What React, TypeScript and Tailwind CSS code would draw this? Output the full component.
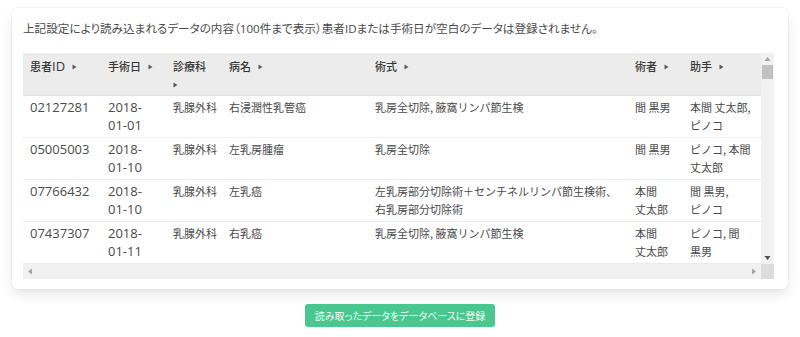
import React from "react";

const Arrow = () => (
  <svg width="5" height="6" viewBox="0 0 5 6" className="inline-block align-middle ml-[7px] mb-[2px]">
    <path d="M0.5 0.5 L4.5 3 L0.5 5.5 Z" fill="#5a5a5a" />
  </svg>
);

const L = ({ children }: { children: React.ReactNode }) => (
  <span className="font-['Open_Sans',sans-serif] text-[13px]">{children}</span>
);

type Row = {
  id: string;
  date: [string, string];
  dept: string;
  disease: string;
  op: string[];
  surgeon: string[];
  assist: string[];
};

const rows: Row[] = [
  {
    id: "02127281",
    date: ["2018-", "01-01"],
    dept: "乳腺外科",
    disease: "右浸潤性乳管癌",
    op: ["乳房全切除, 腋窩リンパ節生検"],
    surgeon: ["間 黒男"],
    assist: ["本間 丈太郎,", "ピノコ"],
  },
  {
    id: "05005003",
    date: ["2018-", "01-10"],
    dept: "乳腺外科",
    disease: "左乳房腫瘤",
    op: ["乳房全切除"],
    surgeon: ["間 黒男"],
    assist: ["ピノコ, 本間", "丈太郎"],
  },
  {
    id: "07766432",
    date: ["2018-", "01-10"],
    dept: "乳腺外科",
    disease: "左乳癌",
    op: ["左乳房部分切除術＋センチネルリンパ節生検術、", "右乳房部分切除術"],
    surgeon: ["本間", "丈太郎"],
    assist: ["間 黒男,", "ピノコ"],
  },
  {
    id: "07437307",
    date: ["2018-", "01-11"],
    dept: "乳腺外科",
    disease: "右乳癌",
    op: ["乳房全切除, 腋窩リンパ節生検"],
    surgeon: ["本間", "丈太郎"],
    assist: ["ピノコ, 間", "黒男"],
  },
];

const Lines = ({ lines }: { lines: string[] }) => (
  <>
    {lines.map((l, i) => (
      <div key={i} className="whitespace-nowrap">
        {l}
      </div>
    ))}
  </>
);

const td = "px-[7px] pt-[2px] pb-[3px] align-top whitespace-nowrap border-b border-[#ebebeb]";
const th = "px-[7px] pt-[4px] pb-[2px] align-top whitespace-nowrap text-left font-medium text-[#363636] border-b border-[#e0e0e0]";

export default function App() {
  return (
    <div className="min-h-[337px] bg-white font-['Noto_Sans_CJK_JP',sans-serif] text-[11px] text-[#4a4a4a]">
      <div className="pt-[8px] px-[12px]">
        <div className="h-[281px] rounded-[6px] bg-white px-[11px] pt-[11px] shadow-[0_6px_14px_-2px_rgba(10,10,10,0.12),0_0_0_1px_rgba(10,10,10,0.03)]">
          <p className="leading-[18px] text-[11.6px] whitespace-nowrap [font-feature-settings:'palt']">
            上記設定により読み込まれるデータの内容（<span className="font-['Open_Sans',sans-serif]">100</span>件まで表示）患者<span className="font-['Open_Sans',sans-serif]">ID</span>または手術日が空白のデータは登録されません。
          </p>
          <div className="mt-[15px] flex flex-col h-[226px] bg-white">
            <div className="flex h-[211px]">
              <div className="w-[738px] overflow-hidden">
                <table className="table-fixed border-collapse w-[820px] leading-[18px]">
                  <colgroup>
                    <col className="w-[78px]" />
                    <col className="w-[65px]" />
                    <col className="w-[56px]" />
                    <col className="w-[146px]" />
                    <col className="w-[260px]" />
                    <col className="w-[55px]" />
                    <col className="w-[160px]" />
                  </colgroup>
                  <thead>
                    <tr className="bg-[#ececec] h-[42px]">
                      <th className={th}>
                        患者<L>ID</L>
                        <Arrow />
                      </th>
                      <th className={th}>
                        手術日
                        <Arrow />
                      </th>
                      <th className={th}>
                        <div>診療科</div>
                        <div className="-ml-[7px]">
                          <Arrow />
                        </div>
                      </th>
                      <th className={th}>
                        病名
                        <Arrow />
                      </th>
                      <th className={th}>
                        術式
                        <Arrow />
                      </th>
                      <th className={th}>
                        術者
                        <Arrow />
                      </th>
                      <th className={th}>
                        助手
                        <Arrow />
                      </th>
                    </tr>
                  </thead>
                  <tbody>
                    {rows.map((r) => (
                      <tr key={r.id} className="h-[42px]">
                        <td className={td}>
                          <L>{r.id}</L>
                        </td>
                        <td className={td}>
                          <div>
                            <L>{r.date[0]}</L>
                          </div>
                          <div>
                            <L>{r.date[1]}</L>
                          </div>
                        </td>
                        <td className={td}>{r.dept}</td>
                        <td className={td}>{r.disease}</td>
                        <td className={td}>
                          <Lines lines={r.op} />
                        </td>
                        <td className={td}>
                          <Lines lines={r.surgeon} />
                        </td>
                        <td className={td}>
                          <Lines lines={r.assist} />
                        </td>
                      </tr>
                    ))}
                  </tbody>
                </table>
              </div>
              <div className="w-[13px] bg-[#f1f1f1] flex flex-col items-center">
                <svg width="7" height="6" viewBox="0 0 7 6" className="mt-[3px]">
                  <path d="M3.5 1 L6.5 5 L0.5 5 Z" fill="#a3a3a3" />
                </svg>
                <div className="mt-[3px] w-[11px] h-[14px] bg-[#c1c1c1]" />
                <div className="flex-1" />
                <svg width="7" height="6" viewBox="0 0 7 6" className="mb-[3px]">
                  <path d="M0.5 1 L6.5 1 L3.5 5 Z" fill="#505050" />
                </svg>
              </div>
            </div>
            <div className="flex h-[15px]">
              <div className="w-[738px] bg-[#f1f1f1] flex items-center justify-between px-[4px]">
                <svg width="6" height="7" viewBox="0 0 6 7">
                  <path d="M5 0.5 L5 6.5 L1 3.5 Z" fill="#a3a3a3" />
                </svg>
                <svg width="6" height="7" viewBox="0 0 6 7">
                  <path d="M1 0.5 L1 6.5 L5 3.5 Z" fill="#a3a3a3" />
                </svg>
              </div>
              <div className="w-[13px] bg-[#dcdcdc]" />
            </div>
          </div>
        </div>
      </div>
      <div className="mt-[15px] flex justify-center">
        <button className="h-[23px] px-[10px] rounded-[3px] bg-[#48c78e] text-[#f2fbf6] text-[10px] leading-[23px] [font-feature-settings:'palt']">
          読み取ったデータをデータベースに登録
        </button>
      </div>
    </div>
  );
}
